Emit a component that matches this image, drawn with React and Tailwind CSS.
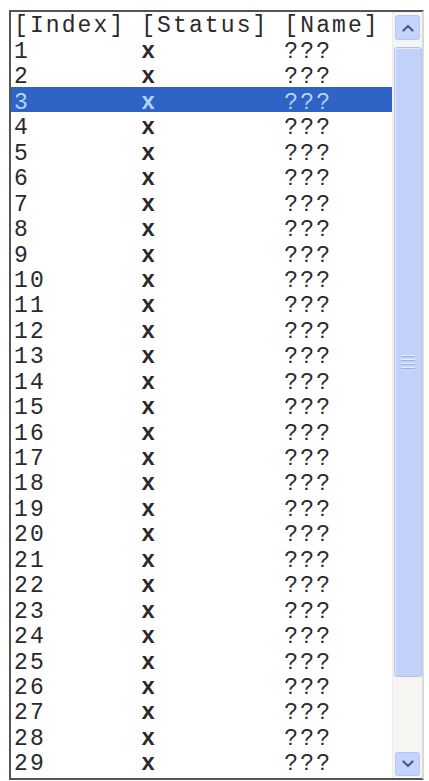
import React from "react";

const rows = Array.from({ length: 29 }, (_, i) => i + 1);

function pad(s, n) {
  return s + " ".repeat(Math.max(0, n - s.length));
}

function Chevron({ up }) {
  return (
    <svg width="12" height="8" viewBox="0 0 12 8" fill="none">
      <path
        d={up ? "M1.5 6.5 L6 2 L10.5 6.5" : "M1.5 1.5 L6 6 L10.5 1.5"}
        stroke="#4a5d85"
        strokeWidth="2.2"
        strokeLinecap="round"
        strokeLinejoin="round"
      />
    </svg>
  );
}

export default function App() {
  return (
    <div className="w-[429px] h-[781px] bg-white pt-[10px] pl-[9px] overflow-hidden">
      <div className="w-[415px] h-[770px] flex border-2 border-[#555555] border-r-[#d8d8d8] bg-white overflow-hidden">
        {/* list */}
        <div
          className="flex-1 min-w-0 overflow-hidden text-[#2a2a2a] text-[23px] tracking-[2.1px] whitespace-pre"
          style={{ fontFamily: '"Liberation Mono", "Courier New", monospace' }}
        >
          <div className="h-[24px] leading-[29px] pl-[3px]">[Index] [Status] [Name]</div>
          {rows.map((n) => (
            <div
              key={n}
              className={
                n === 3
                  ? "h-[25.45px] leading-[33px] pl-[3px] bg-[#2f64c6] text-[#b3d4fb]"
                  : "h-[25.45px] leading-[33px] pl-[3px]"
              }
            >
              {pad(String(n), 8)}
              <span className="font-bold">x</span>
              {pad("", 8)}
              ???
            </div>
          ))}
        </div>

        {/* scrollbar */}
        <div className="w-[30px] shrink-0 bg-[#f6f5f1] border-l border-[#eeede8] flex flex-col items-center pt-[3px] pb-[2px]">
          <div className="w-[25px] h-[25px] rounded-[3px] bg-[#c5d4fc] border border-[#b3c5f2] flex items-center justify-center">
            <Chevron up />
          </div>
          <div className="w-[28px] h-[630px] mt-[7px] rounded-[3px] bg-[#c3d2fb] border border-[#b0c2ef] shadow-[inset_1px_1px_0_#e4ebff] flex items-center justify-center">
            <div className="flex flex-col gap-[2px] w-[14px]">
              <div className="h-[2px] bg-[#e9efff] border-b border-[#9cb1e6]" />
              <div className="h-[2px] bg-[#e9efff] border-b border-[#9cb1e6]" />
              <div className="h-[2px] bg-[#e9efff] border-b border-[#9cb1e6]" />
              <div className="h-[2px] bg-[#e9efff] border-b border-[#9cb1e6]" />
            </div>
          </div>
          <div className="flex-1" />
          <div className="w-[25px] h-[24px] rounded-[3px] bg-[#c5d4fc] border border-[#b3c5f2] flex items-center justify-center">
            <Chevron />
          </div>
        </div>
      </div>
    </div>
  );
}
